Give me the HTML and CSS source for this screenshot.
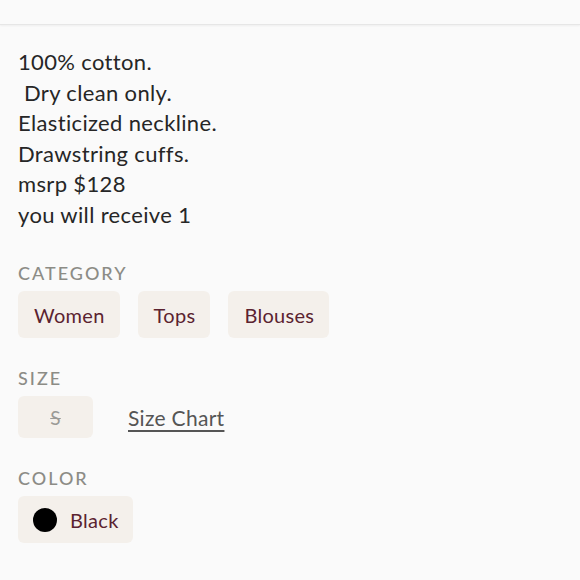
FILE: index.html
```html
<!DOCTYPE html>
<html>
<head>
<meta charset="utf-8">
<link rel="stylesheet" href="styles.css">
</head>
<body>
<div class="topbar"></div>
<main class="content">
  <div class="description">
    <div>100% cotton.</div>
    <div>&nbsp;Dry clean only.</div>
    <div>Elasticized neckline.</div>
    <div>Drawstring cuffs.</div>
    <div>msrp $128</div>
    <div>you will receive 1</div>
  </div>
  <section class="group">
    <div class="label">CATEGORY</div>
    <div class="chips">
      <span class="chip">Women</span>
      <span class="chip">Tops</span>
      <span class="chip">Blouses</span>
    </div>
  </section>
  <section class="group">
    <div class="label">SIZE</div>
    <div class="chips size-row">
      <span class="chip size-chip">S</span>
      <a class="size-chart">Size Chart</a>
    </div>
  </section>
  <section class="group">
    <div class="label">COLOR</div>
    <div class="chips">
      <span class="chip color-chip"><span class="swatch"></span>Black</span>
    </div>
  </section>
</main>
</body>
</html>
```
FILE: styles.css
```css
html, body {
  margin: 0;
  padding: 0;
  background: #fafafa;
}
body {
  font-family: "Lato", "Noto Sans", sans-serif;
  color: #2b2b2b;
}
.topbar {
  height: 24px;
  background: #fafafa;
  border-bottom: 1px solid #e6e6e6;
  box-shadow: 0 1px 2px rgba(0,0,0,0.05);
}
.content {
  padding: 22px 18px 0 18px;
}
.description {
  font-size: 22px;
  letter-spacing: 0.35px;
  line-height: 30.5px;
  color: #262626;
}
.group {
  margin-top: 32px;
}
.group + .group {
  margin-top: 29px;
}
.label {
  font-size: 18px;
  letter-spacing: 2px;
  color: #8c8c86;
  line-height: 22px;
  font-weight: 500;
}
.chips {
  display: flex;
  gap: 18px;
  margin-top: 7px;
  align-items: center;
}
.chip {
  background: #f4f0eb;
  border-radius: 6px;
  color: #5b2330;
  font-size: 20px;
  letter-spacing: 0.3px;
  height: 47px;
  padding: 0 15px 0 16px;
  display: flex;
  align-items: center;
}
.size-row {
  gap: 35px;
}
.size-chip {
  height: 42px;
  width: 75px;
  padding: 0;
  justify-content: center;
  color: #9a9a96;
  text-decoration: line-through;
  font-size: 19px;
}
.size-chart {
  font-size: 21px;
  letter-spacing: 0.3px;
  color: #555;
  text-decoration: underline;
  text-underline-offset: 4px;
}
.color-chip {
  padding: 0 14px 0 15px;
  gap: 13px;
}
.swatch {
  width: 24px;
  height: 24px;
  border-radius: 50%;
  background: #000;
  display: inline-block;
}
```
